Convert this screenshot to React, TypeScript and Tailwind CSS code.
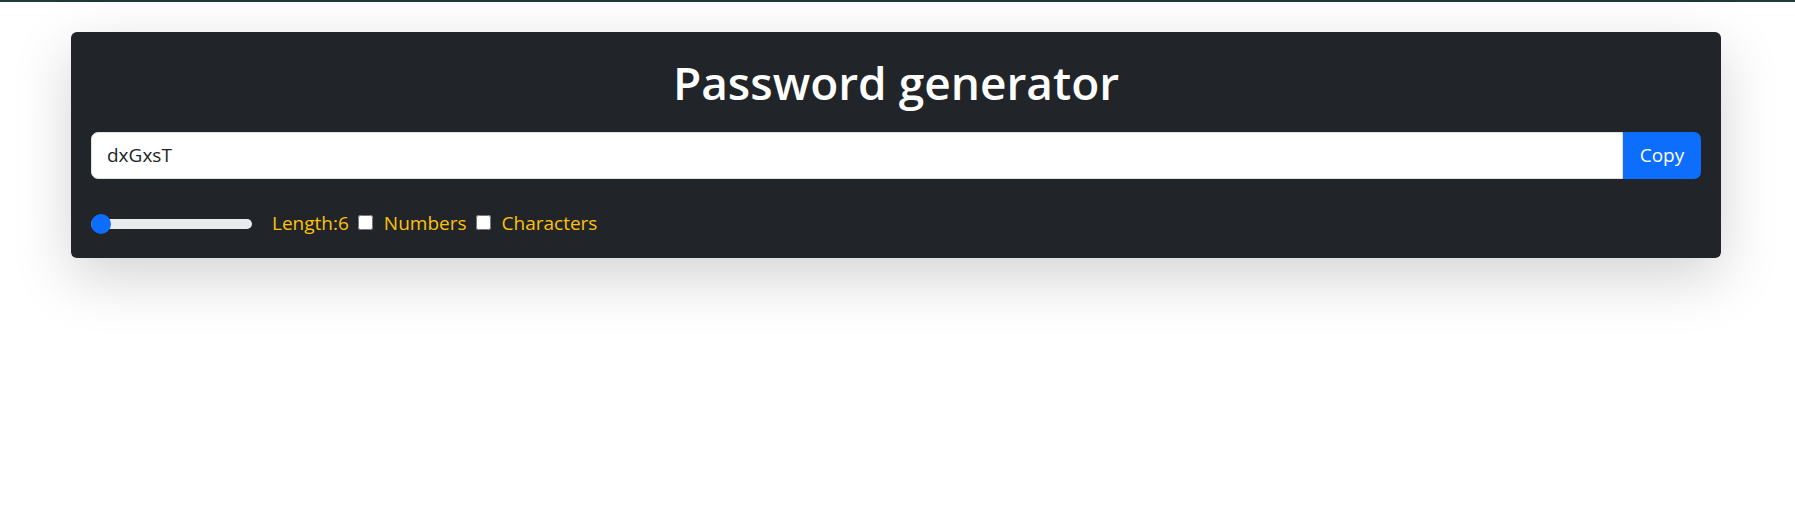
import { useState } from 'react';

const App = () => {
  const [length, setLength] = useState(6);
  const [numbers, setNumbers] = useState(false);
  const [characters, setCharacters] = useState(false);
  const password = 'dxGxsT';

  return (
    <div className="min-h-screen bg-white font-['Open_Sans',sans-serif]">
      <div className="h-[2px] bg-[#1f3a36]" />
      <div className="pl-[71px] pr-[74px] pt-[30px]">
        <div className="bg-[#212529] rounded-[6px] px-5 pt-[23px] pb-[20px] shadow-[0_19px_58px_rgba(0,0,0,0.175)]">
          <h1 className="text-center text-white text-[46px] leading-[1.2] font-semibold mb-[22px]">
            Password generator
          </h1>

          <div className="flex h-[47px]">
            <input
              type="text"
              value={password}
              readOnly
              className="flex-1 bg-white text-[#212529] text-[19px] px-[15px] border border-[#dee2e6] rounded-l-[7px] outline-none"
            />
            <button className="w-[78px] bg-[#0d6efd] text-white text-[19px] rounded-r-[7px]">
              Copy
            </button>
          </div>

          <div className="flex items-center mt-[30px] h-[29px] text-[19px] leading-[29px] text-[#ffc107]">
            <input
              type="range"
              min={6}
              max={100}
              value={length}
              onChange={(e) => setLength(Number(e.target.value))}
              className="w-[161px] h-[20px] appearance-none bg-transparent cursor-pointer [&::-webkit-slider-runnable-track]:h-[10px] [&::-webkit-slider-runnable-track]:rounded-full [&::-webkit-slider-runnable-track]:bg-[#e9ecef] [&::-webkit-slider-thumb]:appearance-none [&::-webkit-slider-thumb]:w-[20px] [&::-webkit-slider-thumb]:h-[20px] [&::-webkit-slider-thumb]:rounded-full [&::-webkit-slider-thumb]:bg-[#0d6efd] [&::-webkit-slider-thumb]:mt-[-5px]"
            />
            <label className="ml-[20px]">Length:{length}</label>
            <input
              type="checkbox"
              checked={numbers}
              onChange={() => setNumbers(!numbers)}
              className="ml-[9px] w-[15px] h-[15px] mb-[3px]"
            />
            <label className="ml-[11px]">Numbers</label>
            <input
              type="checkbox"
              checked={characters}
              onChange={() => setCharacters(!characters)}
              className="ml-[9px] w-[15px] h-[15px] mb-[3px]"
            />
            <label className="ml-[11px]">Characters</label>
          </div>
        </div>
      </div>
    </div>
  );
};

export default App;
